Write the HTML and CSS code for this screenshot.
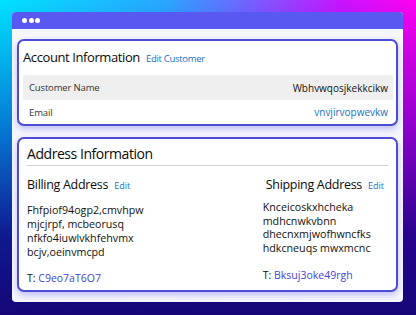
FILE: index.html
```html
<!DOCTYPE html>
<html>
<head>
<meta charset="utf-8">
<link rel="stylesheet" href="styles.css">
</head>
<body>
<div class="window">
  <div class="titlebar"><span class="dot"></span><span class="dot"></span><span class="dot"></span></div>
  <div class="content">
    <section class="card account">
      <div class="card-head">
        <h2>Account Information</h2>
        <a class="edit">Edit Customer</a>
      </div>
      <div class="row shaded">
        <span class="label">Customer Name</span>
        <span class="value">Wbhvwqosjkekkcikw</span>
      </div>
      <div class="row second">
        <span class="label">Email</span>
        <a class="value link">vnvjirvopwevkw</a>
      </div>
    </section>
    <section class="card address">
      <h2 class="addr-title">Address Information</h2>
      <div class="cols">
        <div class="col billing">
          <div class="col-head"><h3>Billing Address</h3><a class="edit small">Edit</a></div>
          <div class="lines">
            <div>Fhfpiof94ogp2,cmvhpw</div>
            <div>mjcjrpf, mcbeorusq</div>
            <div>nfkfo4iuwlvkhfehvmx</div>
            <div>bcjv,oeinvmcpd</div>
          </div>
          <div class="phone">T: <a>C9eo7aT6O7</a></div>
        </div>
        <div class="col shipping">
          <div class="col-head"><h3>Shipping Address</h3><a class="edit small">Edit</a></div>
          <div class="lines">
            <div>Knceicoskxhcheka</div>
            <div>mdhcnwkvbnn</div>
            <div>dhecnxmjwofhwncfks</div>
            <div>hdkcneuqs mwxmcnc</div>
          </div>
          <div class="phone">T: <a>Bksuj3oke49rgh</a></div>
        </div>
      </div>
    </section>
  </div>
</div>
</body>
</html>
```
FILE: styles.css
```css
html, body {
  margin: 0;
  padding: 0;
  width: 416px;
  height: 315px;
  overflow: hidden;
}
body {
  font-family: "Open Sans", "Noto Sans", sans-serif;
  color: #111;
  background:
    linear-gradient(to bottom, rgba(10, 0, 150, 0) 0%, rgba(10, 0, 160, 0.45) 40%, rgba(16, 4, 130, 0.9) 75%, rgba(20, 6, 120, 1) 100%),
    linear-gradient(to right, #00e2ff 0%, #2aa6ff 40%, #c814ff 82%, #ff00f0 100%);
  padding: 12px 13px 13px 12px;
  box-sizing: border-box;
}
.window {
  width: 391px;
  height: 290px;
  background: #f6f6fd;
  border-radius: 4px;
  overflow: hidden;
  display: flex;
  flex-direction: column;
}
.titlebar {
  height: 17px;
  background: #5959f2;
  display: flex;
  align-items: center;
  gap: 1.5px;
  padding-left: 10px;
  flex-shrink: 0;
}
.dot {
  width: 5px;
  height: 5px;
  border-radius: 50%;
  background: #fff;
}
.content {
  padding: 10px 5px 10px 5px;
  display: flex;
  flex-direction: column;
  gap: 11px;
}
.card {
  background: #fff;
  border: 2px solid #4b4bd4;
  border-radius: 7px;
  box-shadow: 0 3px 6px rgba(90, 90, 230, 0.35);
  box-sizing: border-box;
}
.account {
  padding: 6px 3px 0 4px;
  height: 87px;
}
.card-head {
  display: flex;
  align-items: baseline;
  gap: 6px;
  height: 20px;
  margin-bottom: 8px;
}
h2 {
  margin: 0;
  font-size: 13px;
  font-weight: 400;
  line-height: 20px;
  letter-spacing: -0.4px;
  color: #0a0a0a;
}
.edit {
  color: #1a70c8;
  font-size: 9.5px;
  letter-spacing: -0.3px;
}
.row {
  display: flex;
  justify-content: space-between;
  align-items: center;
  height: 25px;
  padding: 0 5px 0 6px;
  font-size: 9.5px;
}
.row.second {
  height: 24px;
}
.row.shaded {
  background: #efefef;
}
.label {
  color: #333;
  letter-spacing: -0.15px;
}
.value {
  color: #111;
  font-size: 10px;
}
.link {
  color: #1a70c8;
}
.address {
  padding: 5px 8px 0 8px;
  height: 155px;
}
.addr-title {
  font-size: 14px;
  line-height: 20px;
  letter-spacing: -0.45px;
  padding-bottom: 1px;
  border-bottom: 1px solid #d0d0d0;
}
.cols {
  display: flex;
  justify-content: space-between;
  padding-top: 11px;
}
.col-head {
  display: flex;
  align-items: baseline;
  gap: 6px;
  height: 16px;
}
h3 {
  margin: 0;
  font-size: 12.5px;
  font-weight: 400;
  line-height: 16px;
  letter-spacing: -0.3px;
  color: #0a0a0a;
}
.small {
  font-size: 9px;
  letter-spacing: 0;
}
.lines {
  font-size: 10.7px;
  line-height: 14px;
  margin-top: 10px;
  color: #111;
}
.shipping {
  padding-right: 4px;
  margin-left: auto;
}
.shipping .lines {
  line-height: 13.6px;
  margin-top: 8px;
  margin-left: -3px;
}
.phone {
  margin-top: 12px;
  font-size: 10.5px;
  line-height: 14px;
  color: #111;
}
.shipping .phone {
  margin-top: 13px;
  margin-left: -3px;
}
.phone a {
  color: #4343d6;
}
```
